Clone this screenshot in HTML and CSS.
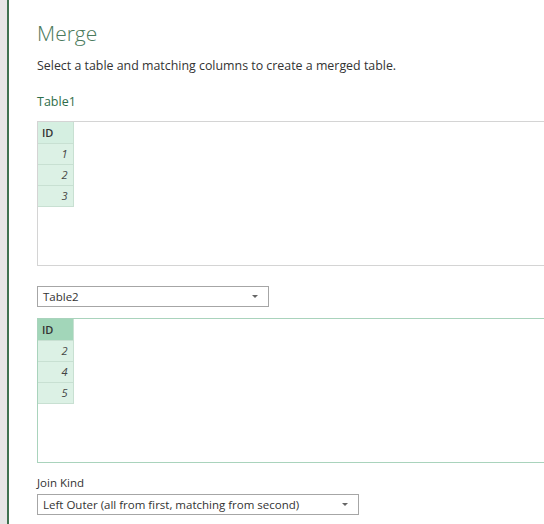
FILE: index.html
```html
<!DOCTYPE html>
<html lang="en">
<head>
    <meta charset="UTF-8">
    <title>Merge</title>
    <link rel="stylesheet" href="styles.css">
</head>
<body>
    <div class="rail"></div>
    <main class="dialog">
        <h1>Merge</h1>
        <p class="intro">Select a table and matching columns to create a merged table.</p>
        <h2>Table1</h2>
        <div class="preview">
            <table>
                <tr><th>ID</th></tr>
                <tr><td>1</td></tr>
                <tr><td>2</td></tr>
                <tr><td>3</td></tr>
            </table>
        </div>
        <div class="select short">
            <span>Table2</span>
            <span class="caret"></span>
        </div>
        <div class="preview second">
            <table>
                <tr><th>ID</th></tr>
                <tr><td>2</td></tr>
                <tr><td>4</td></tr>
                <tr><td>5</td></tr>
            </table>
        </div>
        <label class="field-label">Join Kind</label>
        <div class="select long">
            <span>Left Outer (all from first, matching from second)</span>
            <span class="caret"></span>
        </div>
    </main>
</body>
</html>
```

FILE: styles.css
```css
body {
    margin: 0;
    font-family: "Open Sans", "Noto Sans", sans-serif;
    background-color: white;
    color: #333;
    display: flex;
    height: 524px;
    overflow: hidden;
}
.rail {
    width: 7px;
    background-color: #e6e6e6;
    border-right: 2px solid #3f7250;
    flex-shrink: 0;
}
.dialog {
    flex: 1;
    padding: 0 0 0 28px;
    overflow: hidden;
}
h1 {
    margin: 19px 0 0;
    font-size: 21px;
    font-weight: 300;
    color: #4a7a5c;
    line-height: 28px;
}
.intro {
    margin: 10px 0 0;
    font-size: 12.4px;
    line-height: 18px;
    white-space: nowrap;
}
h2 {
    margin: 18px 0 0;
    font-size: 12.5px;
    font-weight: normal;
    color: #2f6e4a;
    line-height: 18px;
}
.preview {
    margin-top: 10px;
    height: 143px;
    width: 600px;
    border: 1px solid #d4d4d4;
}
.preview.second {
    margin-top: 11px;
    border-color: #a9d3bc;
}
table {
    border-collapse: collapse;
    font-size: 11px;
}
th, td {
    width: 35px;
    height: 21px;
    padding: 0 5px 0 4px;
    box-sizing: border-box;
    background-color: #dcf1e5;
    border-bottom: 1px solid #c8e0d2;
    border-right: 1px solid #c8e0d2;
}
th {
    text-align: left;
    font-weight: 600;
    background-color: #d5efe1;
}
td {
    text-align: right;
    font-style: italic;
    color: #444;
}
.second th {
    background-color: #a2d6b9;
}
.select {
    display: flex;
    justify-content: space-between;
    align-items: center;
    height: 19px;
    border: 1px solid #a6a6a6;
    padding: 0 10px 0 5px;
    font-size: 11.5px;
    color: #333;
}
.select.short {
    margin-top: 20px;
    width: 215px;
}
.select.long {
    width: 305px;
    margin-top: 3px;
}
.caret {
    width: 0;
    height: 0;
    border-left: 3px solid transparent;
    border-right: 3px solid transparent;
    border-top: 3px solid #666;
}
.field-label {
    display: block;
    margin-top: 12px;
    font-size: 11.5px;
    line-height: 16px;
}
```
